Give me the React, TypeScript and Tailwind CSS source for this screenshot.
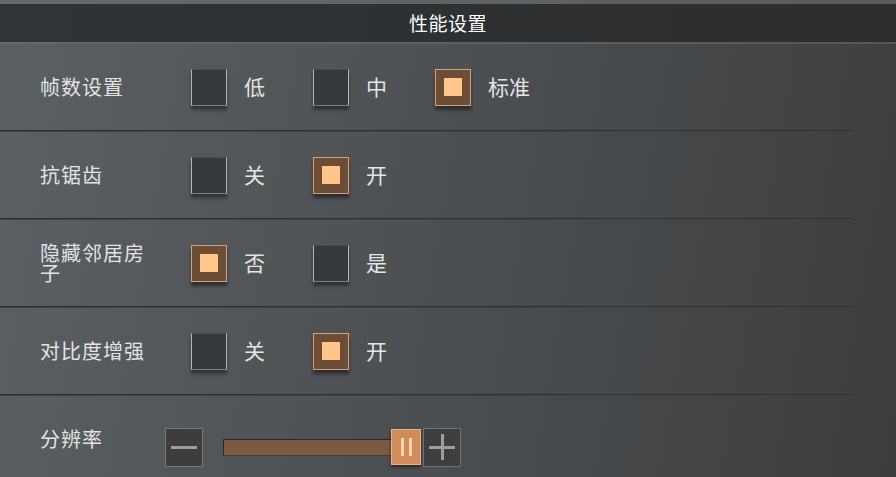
import React, { useState } from 'react';

const font = { fontFamily: '"Noto Sans CJK SC", "Noto Sans", sans-serif' };

function Box({ on, onClick }: { on: boolean; onClick: () => void }) {
  if (on) {
    return (
      <button
        onClick={onClick}
        className="w-[36px] h-[37px] flex items-center justify-center bg-[#6d4d36] border border-[#d7a077] shadow-[0_4px_3px_rgba(0,0,0,0.45)] flex-shrink-0"
      >
        <span className="w-[18px] h-[18px] bg-[#ffc58b]" />
      </button>
    );
  }
  return (
    <button
      onClick={onClick}
      className="w-[36px] h-[37px] bg-[#36393b] border-x border-x-[#b4b6b7] border-t border-t-[#4a4d4f] border-b border-b-[#7d8083] shadow-[0_4px_3px_rgba(0,0,0,0.4)] flex-shrink-0"
    />
  );
}

function Row({ label, options, value, onChange }: { label: string; options: string[]; value: number; onChange: (i: number) => void }) {
  return (
    <div>
      <div className="h-[86px] flex items-center pl-[40px]">
        <div className="w-[151px] pr-[40px] text-[20px] leading-[20px] tracking-[1px] text-[#e2e3e3]">{label}</div>
        {options.map((o, i) => (
          <div key={o} className="w-[122px] flex items-center">
            <Box on={value === i} onClick={() => onChange(i)} />
            <span className="ml-[17px] text-[21px] text-[#e4e5e5]">{o}</span>
          </div>
        ))}
      </div>
      <div className="w-[853px] h-[2px] bg-[#2f3133] border-b border-b-[#5b5f62]/40" />
    </div>
  );
}

export default function App() {
  const [fps, setFps] = useState(2);
  const [aa, setAa] = useState(1);
  const [hide, setHide] = useState(0);
  const [contrast, setContrast] = useState(1);

  return (
    <div style={font} className="w-[896px] h-[477px] overflow-hidden bg-[linear-gradient(100deg,#5b6064_0%,#4d5154_45%,#3c3d3e_100%)]">
      <div className="h-[4px] bg-[linear-gradient(90deg,#65696c,#5a5c5e)]" />
      <div className="h-[38px] bg-[linear-gradient(90deg,#313436,#2b2d2f)] flex items-center justify-center">
        <span className="text-[19px] text-white tracking-[0.5px]">性能设置</span>
      </div>
      <div className="h-[2px] bg-[#6b6f72]/50" />
      <Row label="帧数设置" options={['低', '中', '标准']} value={fps} onChange={setFps} />
      <Row label="抗锯齿" options={['关', '开']} value={aa} onChange={setAa} />
      <Row label="隐藏邻居房子" options={['否', '是']} value={hide} onChange={setHide} />
      <Row label="对比度增强" options={['关', '开']} value={contrast} onChange={setContrast} />
      <div className="h-[80px] flex items-center pl-[40px]">
        <div className="w-[125px] text-[20px] tracking-[1px] text-[#e2e3e3] mt-[6px]">分辨率</div>
        <div className="flex items-center mt-[22px]">
          <button className="w-[38px] h-[39px] bg-[#3b3d3f] border border-[#77797b] flex items-center justify-center">
            <span className="w-[26px] h-[3px] bg-[#9d9e9f]" />
          </button>
          <div className="ml-[20px] relative w-[200px] h-[39px] flex items-center">
            <div className="w-[178px] h-[17px] bg-[#7a5a42] border border-[#2c2926] border-b-[#4b3a2e]" />
            <div className="absolute left-[168px] top-[1px] w-[30px] h-[36px] bg-[#d28c5c] border border-[#eeb185] shadow-[0_2px_3px_rgba(0,0,0,0.5)] flex items-center justify-center gap-[5px]">
              <span className="w-[3px] h-[18px] bg-[#ffd6a8]" />
              <span className="w-[3px] h-[18px] bg-[#ffd6a8]" />
            </div>
          </div>
          <button className="w-[38px] h-[39px] bg-[#3c3e40] border border-[#6f7173] relative flex items-center justify-center">
            <span className="absolute w-[26px] h-[3px] bg-[#9d9e9f]" />
            <span className="absolute w-[3px] h-[26px] bg-[#9d9e9f]" />
          </button>
        </div>
      </div>
    </div>
  );
}
